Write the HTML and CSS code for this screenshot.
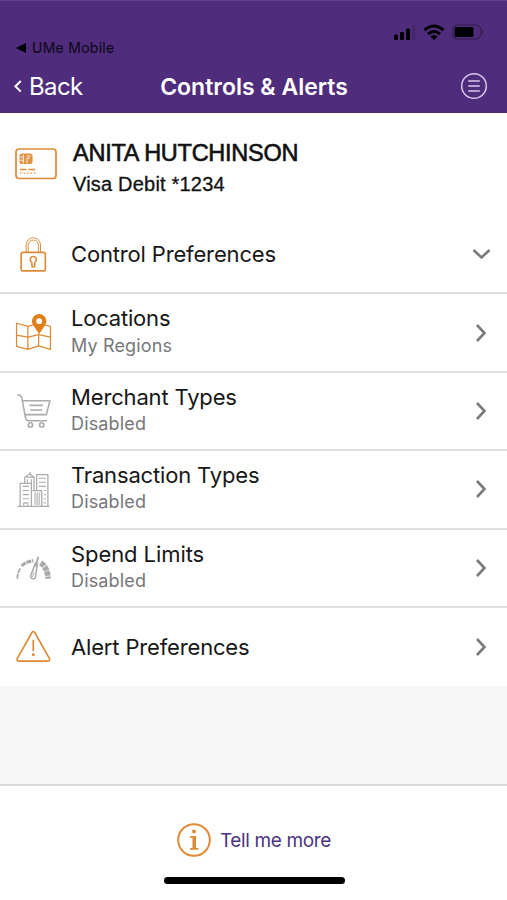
FILE: index.html
```html
<!DOCTYPE html>
<html lang="en">
<head>
<meta charset="utf-8">
<title>Controls &amp; Alerts</title>
<link rel="stylesheet" href="styles.css">
</head>
<body>
<header class="header">
  <div class="status">
    <div class="return"><svg width="11" height="10" viewBox="0 0 11 10"><path d="M0 5 10 0v10z"/></svg><span>UMe Mobile</span></div>
    <svg class="signals" width="92" height="18" viewBox="0 0 92 18">
      <rect x="1" y="11.500" width="4" height="5.500" rx="1.2"/><rect x="7" y="9" width="4" height="8" rx="1.2"/><rect x="13" y="5.500" width="4" height="11.500" rx="1.2"/><rect x="19" y="2" width="3.5" height="15" rx="1.2" opacity=".12"/>
      <g fill="none" stroke="#000" stroke-width="3"><path d="M31.5 7.2q9.500-8.400 19 0"/><path d="M35 11q6-5 12 0"/></g><path d="M37.300 13.500q3.700-3 7.400 0L41 17z"/>
      <rect x="59.500" y="2" width="28" height="14" rx="4" fill="none" stroke="#000" opacity=".4"/><rect x="61.500" y="4" width="19" height="10" rx="1.500"/><path d="M89.200 6.500q2.400 2.500 0 5z" opacity=".5"/>
    </svg>
  </div>
  <nav class="nav">
    <div class="back"><svg width="8" height="13" viewBox="0 0 8 13"><path d="M6.800 1 1.400 6.300l5.400 5.300"/></svg><span>Back</span></div>
    <h1>Controls &amp; Alerts</h1>
    <svg class="menu" width="28" height="28" viewBox="0 0 28 28"><circle cx="14" cy="14" r="12.300"/><path d="M8.200 9h11.600M8.200 14h11.600M8.200 19h11.600"/></svg>
  </nav>
</header>
<main>
  <section class="card">
    <svg class="orange" width="44" height="34" viewBox="0 0 44 34"><rect x="2" y="2" width="40" height="29.500" rx="3" stroke-width="1.700"/><rect x="6" y="7" width="12" height="9.500" rx="1.500" fill="#df9447" stroke-width="1"/><path d="M9.500 7.500v9M6 10h3.500M6 13.200h3.500M13 16.500V11h3M12.500 9h4" stroke="#fff" stroke-width=".8"/><path d="M6 22.500h6.500m2 0H21" stroke-width="1.400"/><path d="M6 26.200h17" stroke-width="1.200" stroke-dasharray="1.500 2"/></svg>
    <div><h2>ANITA HUTCHINSON</h2><p>Visa Debit *1234</p></div>
  </section>
  <ul class="rows">
    <li class="row">
      <svg class="icon orange" viewBox="0 0 36 36"><rect x="6" y="16" width="23.500" height="18" rx="2"/><path d="M10.800 16V8.700a7 7 0 0 1 14 0V16h-2V9a5 5 0 0 0-10 0v7z" stroke-width=".9"/><path d="M16.300 25.500a3 3 0 1 1 3 0l-.3 4.500h-2.400z" stroke-width="1.500"/></svg>
      <div class="copy"><h3 class="control">Control Preferences</h3></div>
      <svg class="arrow" viewBox="0 0 20 20"><path d="m2.500 6 8 7.500 8-7.500"/></svg>
    </li>
    <li class="row">
      <svg class="icon orange" viewBox="0 0 36 36"><path d="M1.500 9 12.500 12 23 9 34.500 12V34.500L23 31 12.500 34.500 1.500 31.500ZM1.500 20.500 12.500 22.500 23 20 34.500 22.500M12.500 12V34.500M23 19V31" stroke-width="1.200"/><path d="M23.500 19.500 17.400 10.500a7 7 0 1 1 12.200 0z" fill="#e07f16" stroke="none"/><circle cx="23.500" cy="7" r="2.800" fill="#fff" stroke="none"/></svg>
      <div class="copy raised"><h3 class="locations">Locations</h3><p class="regions">My Regions</p></div>
      <svg class="arrow" viewBox="0 0 20 20"><path d="m6 2 7.500 8-7.500 8"/></svg>
    </li>
    <li class="row">
      <svg class="icon gray" viewBox="0 0 36 36"><path d="M2 3h2.500l2 2L10 24q.6 4 3 4h18M7 8.500h27L30.500 22H10M14 13h13M15 17.500h11.500" stroke-width="1.500"/><circle cx="15" cy="32" r="2.100"/><circle cx="26" cy="32" r="2.100"/></svg>
      <div class="copy"><h3 class="merchant">Merchant Types</h3><p>Disabled</p></div>
      <svg class="arrow" viewBox="0 0 20 20"><path d="m6 2 7.500 8-7.500 8"/></svg>
    </li>
    <li class="row">
      <svg class="icon gray" viewBox="0 0 36 36"><path d="M2.500 34.500h31M5 34V12h11v22M9.500 12V6l5-3 4 3v13M21 19V3.500h11V34M17 19h9v15M11 6h7M14.500 1v2" stroke-width="1.200"/><path d="M7.500 15h6m-6 4h6m-6 4h6m-6 4h6m9.500-20h7m-7 4h7m-7 4h7m-2 4h2m-2 4h2m-2 4h2m-2 4h2" stroke-width="1.100"/><path d="M19.500 21v12m2-12v12m2-12v12M12 8v4m4-4v4M8.500 34v-3h4v3" stroke-width="1"/></svg>
      <div class="copy"><h3 class="transaction">Transaction Types</h3><p>Disabled</p></div>
      <svg class="arrow" viewBox="0 0 20 20"><path d="m6 2 7.500 8-7.500 8"/></svg>
    </li>
    <li class="row">
      <svg class="icon gray" viewBox="0 0 36 36"><path d="M2.300 29q0-6 2.800-10" stroke-width="1.800" stroke-dasharray="5 .8"/><path d="M6.500 16.500Q11 12 18 11.500" stroke-width="3.200" stroke-dasharray="5 .7"/><path d="M25 13.500Q32 18 32 29" stroke-width="5.500" stroke-dasharray="4.500 .7"/><path d="m15.300 26 4.700-12.500 1.800.5L20 27a2.400 2.400 0 1 1-4.700-1z" stroke-width="1.500" fill="#fff"/><path d="m20 17 2.700-9.500" stroke-width="1.800"/><path d="m17 27 1.600-4" stroke-width="1"/></svg>
      <div class="copy"><h3 class="spend">Spend Limits</h3><p>Disabled</p></div>
      <svg class="arrow" viewBox="0 0 20 20"><path d="m6 2 7.500 8-7.500 8"/></svg>
    </li>
    <li class="row">
      <svg class="icon orange" viewBox="0 0 36 36"><path d="M16.500 4.400q1.300-2 2.700 0L33.400 29.600q1.200 2.600-1.700 2.600H4q-2.900 0-1.700-2.600z" stroke-width="1.600"/><path d="M17.800 11.500v11" stroke-width="1.700"/><circle cx="17.800" cy="26" r="1.400" fill="#df8a36" stroke="none"/></svg>
      <div class="copy"><h3 class="alert">Alert Preferences</h3></div>
      <svg class="arrow" viewBox="0 0 20 20"><path d="m6 2 7.500 8-7.500 8"/></svg>
    </li>
  </ul>
</main>
<footer class="footer">
  <div class="more"><svg class="orange" width="36" height="36" viewBox="0 0 36 36"><circle cx="18" cy="18" r="15.800" stroke-width="2"/><circle cx="18" cy="9.500" r="2" fill="#df8a36" stroke="none"/><path d="M14 14h6v12h2.500v1.800h-8.500V26h2.500V15.700H14z" fill="#df8a36" stroke="none"/></svg><span>Tell me more</span></div>
  <div class="home"></div>
</footer>
</body>
</html>
```
FILE: styles.css
```css
* { box-sizing: border-box; margin: 0; padding: 0; }
body { height: 900px; display: flex; flex-direction: column; background: #f6f6f6; font-family: Inter, sans-serif; color: #171717; overflow: hidden; }
svg { display: block; flex: none; }
h1, h2, h3, p, span { white-space: nowrap; }
.header { height: 113px; background: #502d7c; border-top: 1px solid #634390; }
.status { height: 58px; padding: 21px 22px 0 16px; display: flex; justify-content: space-between; align-items: flex-start; }
.signals { margin-top: 1px; }
.return { display: flex; align-items: center; gap: 5px; margin-top: 17px; font-size: 14px; line-height: 18px; color: #12091f; letter-spacing: .27px; -webkit-text-stroke: .2px #12091f; }
.nav { height: 54px; padding: 0 19px 0 14px; display: grid; grid-template-columns: 1fr auto 1fr; align-items: center; color: #fff; }
.back { display: flex; align-items: center; gap: 7px; font-size: 24px; letter-spacing: -.65px; }
.back path { fill: none; stroke: #fff; stroke-width: 2; }
.nav h1 { padding: 1px 0 0 6px; font-size: 23px; font-weight: 600; line-height: 30px; }
.menu { justify-self: end; fill: none; stroke: #dac7ed; stroke-width: 1.5; }
.card { height: 103px; padding: 25px 14px 0; display: flex; gap: 15px; background: #fff; color: #111; }
.card > svg { margin-top: 9px; }
.card h2 { font: 400 23.5px/30px "Liberation Sans", sans-serif; letter-spacing: -.26px; -webkit-text-stroke: .6px #111; }
.card p { margin-top: 3px; font: 400 20px/26px "Liberation Sans", sans-serif; letter-spacing: .2px; -webkit-text-stroke: .3px #111; }
.rows { list-style: none; background: #fff; }
.row { height: 78.4px; padding: 0 16px 0 15px; display: flex; align-items: center; border-bottom: 2px solid #dedede; }
.row:last-child { height: 78px; border-bottom: 0; }
.icon { width: 37px; height: 37px; }
.copy { flex: 1; margin-left: 19px; }
.copy h3 { font-size: 22px; font-weight: 400; line-height: 28px; letter-spacing: -.16px; }
.copy h3:not(:last-child) { margin-top: -2px; }
.copy.raised h3 { margin: -3px 0 1px; }
.copy .locations { letter-spacing: -.2px; }
.copy .spend { letter-spacing: -.08px; }
.copy p { font-size: 18px; line-height: 26px; letter-spacing: .15px; color: #77777a; }
.arrow { width: 20px; height: 20px; fill: none; stroke: #7b7b7d; stroke-width: 2.6; }
.orange, .gray { fill: none; stroke-width: 1.6; stroke-linejoin: round; }
.orange { stroke: #df8a36; }
.gray { stroke: #aaaaac; }
.footer { margin-top: auto; height: 116px; display: flex; flex-direction: column; align-items: center; background: #fff; border-top: 2px solid #dadada; }
.more { margin-top: 36px; display: flex; align-items: center; gap: 8px; font-size: 19px; letter-spacing: -.36px; color: #4c347f; }
.home { margin: 19px 0 0 2px; width: 181px; height: 7px; border-radius: 4px; background: #000; }
```
